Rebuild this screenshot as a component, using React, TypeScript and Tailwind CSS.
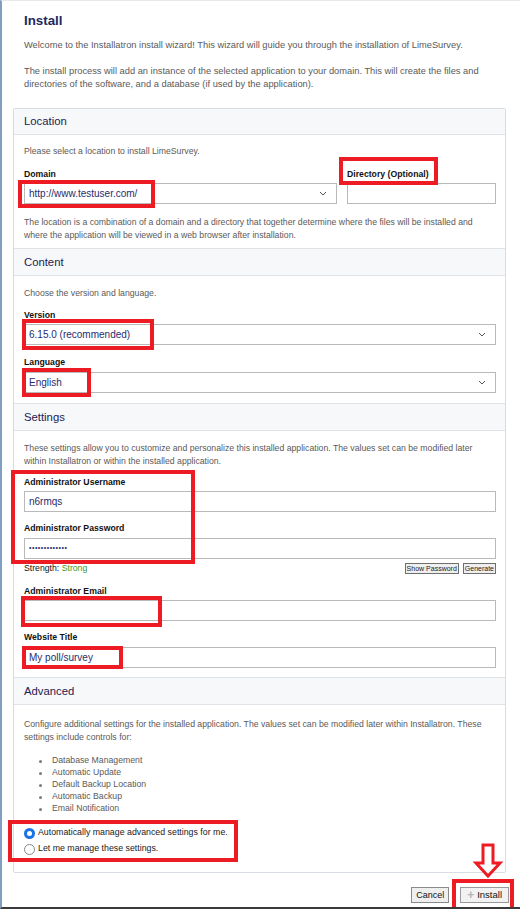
import type React from "react";

const intro = "text-[9.3px] leading-[13px] text-[#5a5a5a]";
const desc = "text-[8.7px] leading-[13px] text-[#5a5a5a]";
const label = "text-[8.7px] font-bold leading-[13px] text-[#111]";

function Chevron() {
  return (
    <svg width="8" height="5" viewBox="0 0 8 5" className="shrink-0">
      <path d="M1 1l3 3 3-3" fill="none" stroke="#555" strokeWidth="1" />
    </svg>
  );
}

function TextField({ value, className = "" }: { value?: React.ReactNode; className?: string }) {
  return (
    <div
      className={`flex h-[21px] items-center border border-[#b9b9b9] bg-white pl-[4px] text-[10px] text-[#262d6e] ${className}`}
    >
      {value}
    </div>
  );
}

function SelectField({ value }: { value: string }) {
  return (
    <div className="flex h-[21px] items-center justify-between border border-[#b9b9b9] bg-white pl-[4px] pr-[9px] text-[10px] text-[#262d6e]">
      <span>{value}</span>
      <Chevron />
    </div>
  );
}

function SectionHeader({ title, first = false }: { title: string; first?: boolean }) {
  return (
    <div
      className={`flex items-center border-b border-[#dfe3e8] bg-[#f7f8fa] pl-[10px] text-[11.3px] text-[#1c2153] ${
        first ? "h-[26px]" : "h-[28px] border-t"
      }`}
    >
      {title}
    </div>
  );
}

function RedBox({ className }: { className: string }) {
  return <div className={`pointer-events-none absolute border-[4px] border-[#ed1c24] ${className}`} />;
}

export default function App() {
  return (
    <div className="relative h-[909px] w-[520px] overflow-hidden border-b-2 border-l-2 border-t border-b-[#3a3a3a] border-l-[#7f9ec0] border-t-[#e8e8e8] bg-white font-['Liberation_Sans',Arial,sans-serif]">
      {/* intro */}
      <div className="pl-[22px] pr-[20px] pt-[12px]">
        <h1 className="text-[13.3px] font-bold leading-[16px] text-[#22285e]">Install</h1>
        <p className={`${intro} mt-[10px]`}>
          Welcome to the Installatron install wizard! This wizard will guide you through the installation of LimeSurvey.
        </p>
        <p className={`${intro} mt-[13px]`}>
          The install process will add an instance of the selected application to your domain. This will create the files and
          directories of the software, and a database (if used by the application).
        </p>
      </div>

      {/* form panel */}
      <div className="ml-[11px] mt-[17px] w-[493px] rounded-[2px] border border-[#d8dde3]">
        <SectionHeader title="Location" first />
        <div className="pb-[6px] pl-[10px] pr-[9px] pt-[10px]">
          <p className={desc}>Please select a location to install LimeSurvey.</p>
          <div className="mt-[10px] grid grid-cols-[313px_1fr] gap-x-[10px]">
            <div className={label}>Domain</div>
            <div className={label}>Directory (Optional)</div>
            <div className="mt-[2px]">
              <SelectField value="http://www.testuser.com/" />
            </div>
            <div className="mt-[2px]">
              <TextField />
            </div>
          </div>
          <p className={`${desc} mt-[12px]`}>
            The location is a combination of a domain and a directory that together determine where the files will be installed and
            where the application will be viewed in a web browser after installation.
          </p>
        </div>

        <SectionHeader title="Content" />
        <div className="pb-[10px] pl-[10px] pr-[9px] pt-[11px]">
          <p className={desc}>Choose the version and language.</p>
          <div className={`${label} mt-[9px]`}>Version</div>
          <div className="mt-[2px]">
            <SelectField value="6.15.0 (recommended)" />
          </div>
          <div className={`${label} mt-[11px]`}>Language</div>
          <div className="mt-[3px]">
            <SelectField value="English" />
          </div>
        </div>

        <SectionHeader title="Settings" />
        <div className="pb-[9px] pl-[10px] pr-[9px] pt-[11px]">
          <p className={desc}>
            These settings allow you to customize and personalize this installed application. The values set can be modified later
            within Installatron or within the installed application.
          </p>
          <div className={`${label} mt-[8px]`}>Administrator Username</div>
          <div className="mt-[2px]">
            <TextField value="n6rmqs" />
          </div>
          <div className={`${label} mt-[10px]`}>Administrator Password</div>
          <div className="mt-[3px]">
            <TextField value={<span className="text-[7px] tracking-[0.5px]">•••••••••••••</span>} />
          </div>
          <div className="mt-[3px] flex items-center justify-between">
            <div className="text-[8.7px] leading-[13px] text-[#111]">
              Strength: <span className="text-[#3d9a1c]">Strong</span>
            </div>
            <div className="flex gap-[4px]">
              <button className="h-[11px] border border-[#6f6f6f] bg-[#efefef] px-[1px] text-[7px] leading-[9px] text-[#222]">
                Show Password
              </button>
              <button className="h-[11px] border border-[#6f6f6f] bg-[#efefef] px-[1px] text-[7px] leading-[9px] text-[#222]">
                Generate
              </button>
            </div>
          </div>
          <div className={`${label} mt-[10px]`}>Administrator Email</div>
          <div className="mt-[2px]">
            <TextField />
          </div>
          <div className={`${label} mt-[10px]`}>Website Title</div>
          <div className="mt-[3px]">
            <TextField value="My poll/survey" />
          </div>
        </div>

        <SectionHeader title="Advanced" />
        <div className="pb-[17px] pl-[10px] pr-[9px] pt-[13px]">
          <p className={desc}>
            Configure additional settings for the installed application. The values set can be modified later within Installatron. These
            settings include controls for:
          </p>
          <ul className="mt-[11px]">
            {["Database Management", "Automatic Update", "Default Backup Location", "Automatic Backup", "Email Notification"].map(
              (item) => (
                <li key={item} className="flex h-[12px] items-center text-[8.7px] text-[#5a5a5a]">
                  <span className="ml-[15px] mr-[10px] h-[3px] w-[3px] rounded-full bg-[#7a7a7a]" />
                  {item}
                </li>
              )
            )}
          </ul>
          <div className="mt-[12px] flex flex-col gap-[4px]">
            <label className="flex h-[12px] items-center gap-[3px] text-[8.8px] text-[#1a1a1a]">
              <span className="flex h-[11px] w-[11px] items-center justify-center rounded-full bg-[#1a73e8]">
                <span className="h-[5px] w-[5px] rounded-full bg-white" />
              </span>
              Automatically manage advanced settings for me.
            </label>
            <label className="flex h-[12px] items-center gap-[3px] text-[8.8px] text-[#1a1a1a]">
              <span className="h-[11px] w-[11px] rounded-full border border-[#8a8a8a] bg-white" />
              Let me manage these settings.
            </label>
          </div>
        </div>
      </div>

      {/* footer buttons */}
      <div className="mt-[14px] flex justify-end gap-[11px] pr-[11px]">
        <button className="h-[16px] border border-[#8a8a8a] bg-[#efefef] px-[4px] text-[9px] leading-[14px] text-[#111]">
          Cancel
        </button>
        <button className="flex h-[16px] items-center gap-[3px] border border-[#9a9a9a] bg-[#f2f2f2] px-[6px] text-[9.5px] leading-[14px] text-[#111]">
          <span className="text-[12px] font-bold leading-[12px] text-[#b5b5b5]">+</span>
          Install
        </button>
      </div>

      {/* annotation overlays */}
      <RedBox className="left-[16px] top-[179px] h-[28px] w-[137px]" />
      <RedBox className="left-[337px] top-[156px] h-[28px] w-[99px]" />
      <RedBox className="left-[20px] top-[318px] h-[31px] w-[132px]" />
      <RedBox className="left-[20px] top-[367px] h-[29px] w-[69px]" />
      <RedBox className="left-[9px] top-[469px] h-[94px] w-[184px]" />
      <RedBox className="left-[19px] top-[595px] h-[31px] w-[141px]" />
      <RedBox className="left-[20px] top-[645px] h-[23px] w-[101px]" />
      <RedBox className="left-[6px] top-[819px] h-[42px] w-[230px]" />
      <RedBox className="left-[450px] top-[878px] h-[34px] w-[62px]" />
      <svg className="absolute left-[470px] top-[842px]" width="32" height="36" viewBox="0 0 32 36">
        <path d="M11 2h10v18h7L16 33 4 20h7z" fill="white" stroke="#ed1c24" strokeWidth="3" strokeLinejoin="miter" />
      </svg>
    </div>
  );
}
